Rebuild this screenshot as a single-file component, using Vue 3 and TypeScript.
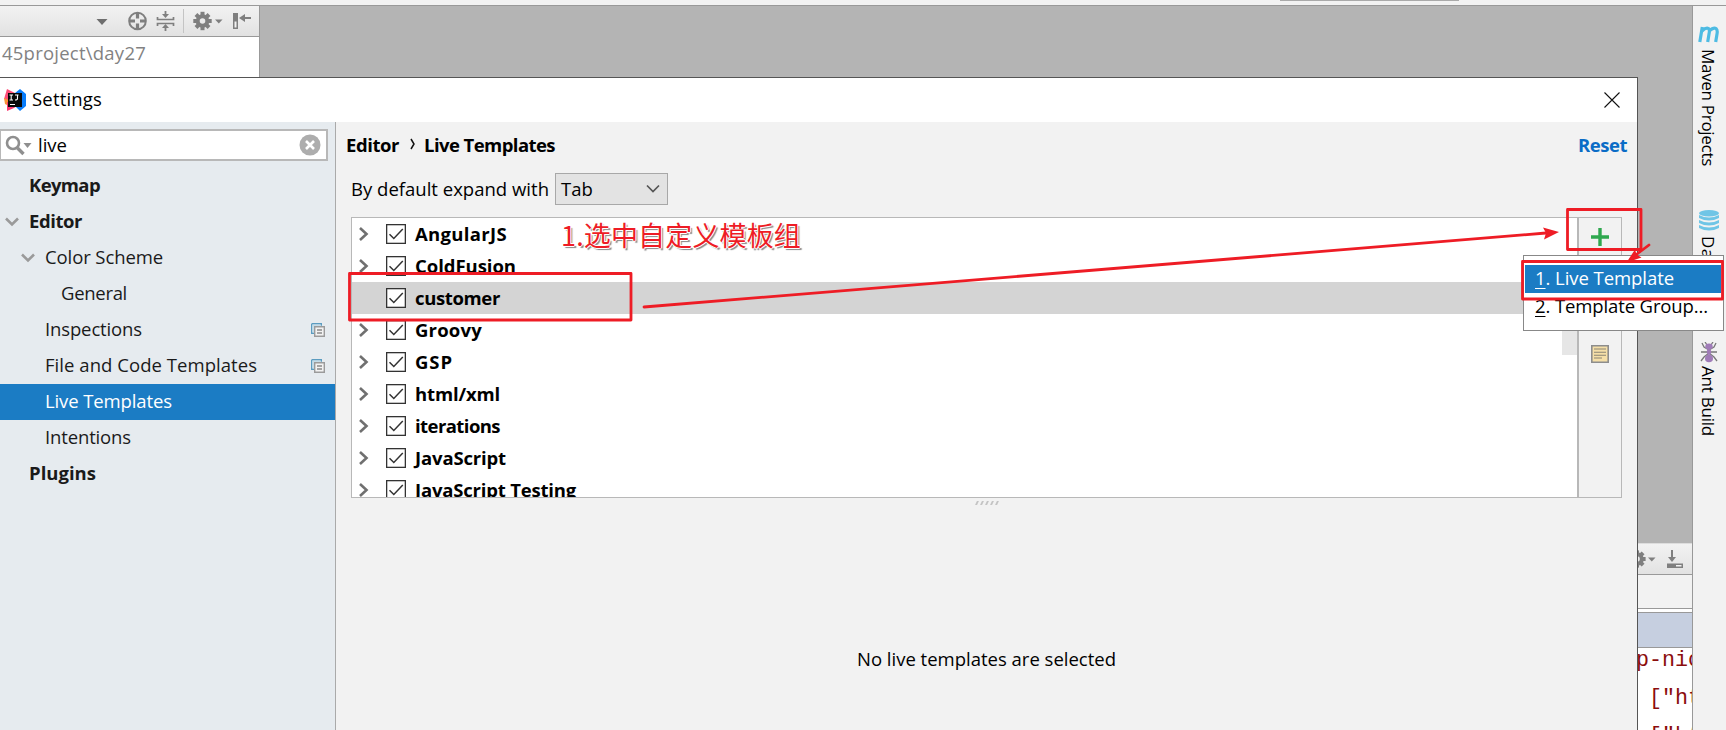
<script setup lang="ts">
import type { Directive } from 'vue'

interface NavItem {
  label: string
  level: number
  width: number
  bold?: boolean
  open?: boolean
  shared?: boolean
  selected?: boolean
}

interface Group {
  label: string
  width: number
  leaf?: boolean
}

const nav: NavItem[] = [
  { label: 'Keymap', level: 0, width: 71, bold: true },
  { label: 'Editor', level: 0, width: 53, bold: true, open: true },
  { label: 'Color Scheme', level: 1, width: 118, open: true },
  { label: 'General', level: 2, width: 66 },
  { label: 'Inspections', level: 1, width: 97 },
  { label: 'File and Code Templates', level: 1, width: 212, shared: true },
  { label: 'Live Templates', level: 1, width: 127, selected: true },
  { label: 'Intentions', level: 1, width: 86 },
  { label: 'Plugins', level: 0, width: 67, bold: true },
]
nav[4].shared = true

const groups: Group[] = [
  { label: 'AngularJS', width: 92 },
  { label: 'ColdFusion', width: 101 },
  { label: 'customer', width: 85, leaf: true },
  { label: 'Groovy', width: 67 },
  { label: 'GSP', width: 38 },
  { label: 'html/xml', width: 85 },
  { label: 'iterations', width: 85 },
  { label: 'JavaScript', width: 91 },
  { label: 'JavaScript Testing', width: 161 },
]

// Tracks a label so that it takes the given length along its line.
const vFit: Directive<HTMLElement, number> = {
  mounted(el, { value }) {
    const vertical = el.classList.contains('vertical')
    const box = el.getBoundingClientRect()
    const natural = vertical ? box.height : box.width
    const count = (el.textContent ?? '').length
    el.style.letterSpacing = `${(value - natural) / count}px`
  },
}

const teeth = [0, 45, 90, 135, 180, 225, 270, 315]
</script>

<template>
  <div class="screen">
    <div class="ide">
      <div class="topbar"><i class="topmark"></i></div>
      <div class="workspace">
        <div class="left">
          <div class="toolbar">
            <svg width="259" height="30" viewBox="0 6 259 30">
              <path d="M96.500 19h11l-5.500 6z" fill="#6e6e6e" />
              <g fill="none" stroke="#7f7f7f">
                <circle cx="137.500" cy="21" r="8.300" stroke-width="2" />
                <path d="M137.500 13v5.500M137.500 23.500V29M129.500 21h5.500M140 21h5.500" stroke-width="3.200" />
                <path d="M157.500 17v2.500h16V17M157.500 26v-2.500h16V26" stroke-width="1.700" />
                <path d="M165.500 11v4M165.500 31v-4" stroke-width="1.800" />
              </g>
              <path d="M162 14h7l-3.500 4zM162 28h7l-3.500-4z" fill="#7f7f7f" />
              <path d="M183.500 9v24" stroke="#c4c4c4" />
              <g transform="translate(202.500 21)">
                <circle r="4.800" fill="none" stroke="#7f7f7f" stroke-width="4" />
                <rect v-for="a in teeth" :key="a" x="-2" y="-9.200" width="4" height="4" fill="#7f7f7f" :transform="`rotate(${a})`" />
              </g>
              <path d="M215 19.500h7.500l-3.700 4z" fill="#7f7f7f" />
              <path d="M233 13h5v16h-5z" fill="#7f7f7f" />
              <path d="M234.500 21.500h2v6h-2z" fill="#f2f2f2" />
              <path d="M242 18h9" stroke="#7f7f7f" stroke-width="2" />
              <path d="M239 18l6-4v8z" fill="#7f7f7f" />
            </svg>
          </div>
          <div class="path"><span v-fit="144">45project\day27</span></div>
        </div>
        <div class="canvas"></div>
        <div class="console">
          <div class="console-head">
            <svg width="55" height="30" viewBox="1637 544 55 30">
              <g transform="translate(1637 559)">
                <circle r="4.800" fill="none" stroke="#7f7f7f" stroke-width="4" />
                <rect v-for="a in teeth" :key="a" x="-2" y="-8.600" width="4" height="4" fill="#7f7f7f" :transform="`rotate(${a})`" />
              </g>
              <path d="M1648 557.500h7.500l-3.700 4z" fill="#7f7f7f" />
              <path d="M1672 550v8" stroke="#7f7f7f" stroke-width="2" />
              <path d="M1668 557h8l-4 5z" fill="#7f7f7f" />
              <path d="M1667 563.500h16v4.500h-16z" fill="#7f7f7f" />
              <path d="M1676 565h5.500v1.500h-5.500z" fill="#f2f2f2" />
            </svg>
          </div>
          <div class="console-tabs"></div>
          <div class="console-gap"></div>
          <div class="console-blue"></div>
          <pre class="code">p-nic
 ["htt
 ["htt</pre>
        </div>
        <div class="strip">
          <svg class="s-m" width="22" height="17" viewBox="0 0 22 17" fill="none" stroke="#4dbbe3" stroke-width="3.200">
            <path d="M4.300 1L1.800 16M4 5Q8 1 10.500 2.500Q12 4 11 8L9.700 16M11 5Q15.500 1 18 2.500Q19.800 4 19 8L17.700 16" />
          </svg>
          <div class="slot"><span class="vertical" v-fit="117">Maven Projects</span></div>
          <svg class="s-db" width="20" height="21" viewBox="0 0 20 21">
            <ellipse cx="10" cy="3.300" rx="10" ry="3.200" fill="#6fc5e6" />
            <path d="M0 5q10 5 20 0v3q-10 5-20 0zM0 10q10 5 20 0v3q-10 5-20 0zM0 15q10 5 20 0v3q-10 5-20 0z" fill="#6fc5e6" />
          </svg>
          <div class="slot db"><span class="vertical" v-fit="79">Database</span></div>
          <svg class="s-ant" width="18" height="21" viewBox="0 0 18 21">
            <path d="M9 8L4 5 2 1M9 8l5-3 2-4M9 10H1M9 10h8M9 11l-5 4-3 4M9 11l5 4 3 4M7 3L5 0M11 3l2-3" fill="none" stroke="#777" stroke-width="1.300" />
            <ellipse cx="9" cy="4.500" rx="3.700" ry="3" fill="#a07cb8" />
            <ellipse cx="9" cy="10" rx="2.200" ry="3" fill="#a07cb8" />
            <ellipse cx="9" cy="16.500" rx="4" ry="3.800" fill="#a07cb8" />
          </svg>
          <div class="slot ant"><span class="vertical" v-fit="70">Ant Build</span></div>
        </div>
      </div>
    </div>

    <div class="dialog">
      <div class="title">
        <svg width="22" height="22" viewBox="0 0 22 22">
          <path d="M3 0L11 4 9 13 0 10z" fill="#fe4c78" />
          <path d="M0 9l7 3-2 5-4-2z" fill="#f99436" />
          <path d="M3 13l12 2-5 4-7 3z" fill="#fc3a72" />
          <path d="M11 4l5-4 6 5v12l-6 5-5-5z" fill="#087cfa" />
          <path d="M4 4h14v14H4z" fill="#090909" />
          <path d="M5.500 6h3.500M7.200 6v5M5.500 11h3.500M11 6h3.500M13.500 6v3.500q0 1.500-2.500 1.500M6 15.500h5" fill="none" stroke="#fff" stroke-width="1.100" />
        </svg>
        <span v-fit="70">Settings</span>
        <svg class="close" width="16" height="16" viewBox="0 0 16 16"><path d="M.5.5l15 15M15.500.5l-15 15" stroke="#111" stroke-width="1.100" /></svg>
      </div>
      <div class="body">
        <div class="sidebar">
          <div class="search">
            <svg width="28" height="26" viewBox="5 132 28 26">
              <circle cx="13" cy="143" r="6" fill="none" stroke="#8f8f8f" stroke-width="2.600" />
              <path d="M17.500 148l6 6" stroke="#8f8f8f" stroke-width="3.400" />
              <path d="M23.500 143h8l-4 5z" fill="#8f8f8f" />
            </svg>
            <span v-fit="29">live</span>
            <svg class="clear" width="22" height="22" viewBox="0 0 22 22">
              <circle cx="11" cy="11" r="10.500" fill="#adadad" />
              <path d="M7 7l8 8M15 7l-8 8" stroke="#fff" stroke-width="2.600" />
            </svg>
          </div>
          <div class="nav">
            <div v-for="n in nav" :key="n.label" class="nav-row" :class="['l' + n.level, { bold: n.bold, on: n.selected }]">
              <svg class="twist" width="16" height="12" viewBox="0 0 16 12">
                <path v-if="n.open" d="M2 2.500l6 6 6-6" fill="none" stroke="#9a9a9a" stroke-width="2.600" />
              </svg>
              <span v-fit="n.width">{{ n.label }}</span>
              <svg v-if="n.shared" class="shared" width="14" height="14" viewBox="0 0 14 14" fill="none">
                <path d="M.7.7h9.600v2M.7.7v9.600h2.500" stroke="#5b9cc0" stroke-width="1.400" />
                <path d="M1.400 1.400h8.200v1.600H3v6.600H1.400z" fill="#c3dce9" />
                <path d="M3.700 3.700h9.600v9.600H3.700z" fill="#f2f2f2" stroke="#9b9b9b" stroke-width="1.400" />
                <path d="M6 7h5M6 10h5" stroke="#8b8b8b" stroke-width="1.300" />
              </svg>
            </div>
          </div>
        </div>
        <div class="main">
          <div class="crumbs">
            <span v-fit="53">Editor</span>
            <svg width="6" height="14" viewBox="0 0 6 14"><path d="M2 2l3 5-3 5" fill="none" stroke="#111" stroke-width="1.500" /></svg>
            <span v-fit="131">Live Templates</span>
            <span class="reset" v-fit="49">Reset</span>
          </div>
          <div class="expand">
            <span v-fit="198">By default expand with</span>
            <div class="select">
              <span v-fit="32">Tab</span>
              <svg width="14" height="10" viewBox="0 0 14 10"><path d="M1 1.500l6 6 6-6" fill="none" stroke="#555" stroke-width="1.700" /></svg>
            </div>
          </div>
          <div class="list">
            <div class="tree">
              <div v-for="g in groups" :key="g.label" class="tree-row" :class="{ hit: g.leaf }">
                <svg class="arrow" width="12" height="16" viewBox="0 0 12 16">
                  <path v-if="!g.leaf" d="M2 2l6.500 6L2 14" fill="none" stroke="#707070" stroke-width="2.600" />
                </svg>
                <svg class="check" width="20" height="20" viewBox="0 0 20 20">
                  <rect x=".65" y=".65" width="18.700" height="18.700" fill="#fff" stroke="#333" stroke-width="1.300" />
                  <path d="M3.500 10.200l4.300 4.300 9-9.500" fill="none" stroke="#333" stroke-width="1.500" />
                </svg>
                <span v-fit="g.width">{{ g.label }}</span>
              </div>
              <i class="thumb"></i>
            </div>
            <div class="actions">
              <svg width="18" height="18" viewBox="0 0 18 18"><path d="M9 0v18M0 9h18" stroke="#2fa84f" stroke-width="3.400" /></svg>
              <svg class="note" width="18" height="18" viewBox="0 0 18 18">
                <path d="M.8.8h16.400v16.400H.8z" fill="#f5dfa8" stroke="#8d8d8d" stroke-width="1.600" />
                <path d="M3 4h12M3 7.300h12M3 10.300h12M3 13h8" stroke="#8b8574" stroke-width="1.100" />
              </svg>
            </div>
          </div>
          <div class="grip"><i v-for="k in 5" :key="k"></i></div>
          <div class="empty"><span v-fit="259">No live templates are selected</span></div>
        </div>
      </div>
    </div>

    <div class="menu">
      <div class="menu-item active"><span v-fit="139"><u>1</u>. Live Template</span></div>
      <div class="menu-item"><span v-fit="173"><u>2</u>. Template Group...</span></div>
    </div>

    <svg class="marks" width="1726" height="730" viewBox="0 0 1726 730" fill="none" stroke="#ee1c25" stroke-width="2.800" stroke-linejoin="round" stroke-linecap="round">
      <path d="M349.500 273.500h281.500v46.500H349.500zM1567.500 209.500h73.500v40h-73.500zM1522.500 261.500h200v37.500h-200z" />
      <path d="M644 307L1546 233M1649 245l-12 9" />
      <path d="M1559 232l-16-4.500 3 5.500-2 6.500zM1626.500 262.500l8.500-13 1.500 5 5 3z" fill="#ee1c25" stroke="none" />
    </svg>
    <div class="caption"><span v-fit="240">1.选中自定义模板组</span></div>
  </div>
</template>

<style>
body {
  overflow: hidden;
}
</style>

<style scoped>
.screen {
  position: relative;
  width: 1726px;
  height: 730px;
  overflow: hidden;
  background: #b4b4b4;
  font-family: "Open Sans", "Noto Sans", "Noto Sans CJK SC", sans-serif;
  font-size: 18.500px;
  color: #000;
  white-space: nowrap;
}
.screen * { box-sizing: border-box; }
svg { display: block; flex: none; }
span { flex: none; }

.ide { display: flex; flex-direction: column; height: 730px; overflow: hidden; }
.topbar { flex: none; height: 6px; background: #f2f2f2; border-bottom: 1px solid #999; display: flex; }
.topmark { width: 179px; height: 1px; margin-left: 1280px; background: #aaa; }
.workspace { height: 724px; flex: none; display: flex; overflow: hidden; }
.left { width: 260px; height: 72px; border-right: 1px solid #999; background: #fff; }
.toolbar { height: 31px; background: linear-gradient(#f2f2f2, #e2e2e2); border-bottom: 1px solid #999; }
.path { padding-left: 2px; line-height: 32px; color: #828282; }
.canvas { flex: 1; }
.console { width: 55px; margin-top: 537px; background: #fff; overflow: hidden; }
.console-head { height: 32px; border-top: 1px solid #ddd; border-bottom: 1px solid #999; background: linear-gradient(#f2f2f2, #e2e2e2); }
.console-tabs { height: 34px; border-bottom: 1px solid #999; background: #f2f2f2; }
.console-gap { height: 4px; border-bottom: 1px solid #999; }
.console-blue { height: 35px; border-bottom: 1px solid #999; background: #c6cfe0; }
.code { margin: -6px 0 0 -1px; font: 21.670px/38px "Liberation Mono", monospace; color: #8b0d0d; }
.strip { width: 34px; border-left: 1px solid #999; background: #f2f2f2; display: flex; flex-direction: column; font-size: 17px; align-items: flex-start; }
.slot { height: 117px; margin: 6px 0 0 3px; display: flex; align-items: flex-start; }
.vertical { writing-mode: vertical-rl; line-height: 24px; }
.s-m { margin: 20px 0 0 5px; }
.s-db { margin: 44px 0 0 6px; }
.slot.db { height: 79px; margin-top: 5px; }
.s-ant { margin: 27px 0 0 7px; }
.slot.ant { height: 70px; margin-top: 3px; }

.dialog { position: absolute; left: 0; top: 77px; width: 1638px; height: 653px; border-top: 1px solid #555; border-right: 1px solid #555; background: #f2f2f2; display: flex; flex-direction: column; }
.title { height: 44px; background: #fff; display: flex; align-items: center; gap: 6px; padding: 0 17px 1px 4px; }
.title span { padding-bottom: 2px; }
.close { margin-left: auto; }
.body { flex: 1; display: flex; }
.sidebar { width: 336px; background: #e6ebef; border-right: 1px solid #aaa; }
.search { width: 328px; height: 32px; margin-top: 7px; border: 2px solid #b8b8b8; border-left-width: 1px; background: #fff; display: flex; align-items: center; padding: 0 5px 0 4px; gap: 5px; }
.search span { padding-bottom: 2px; }
.clear { margin-left: auto; }
.nav { padding-top: 7px; color: #1a1a1a; }
.nav-row { height: 36px; display: flex; align-items: center; gap: 9px; padding-left: 4px; }
.nav-row span { padding-bottom: 4px; }
.nav-row.l1 { padding-left: 20px; }
.nav-row.l2 { padding-left: 36px; }
.bold { font-weight: 700; }
.on { background: #1b7cc4; color: #fff; }
.shared { margin-left: auto; margin-right: 10px; }

.main { flex: 1; display: flex; flex-direction: column; }
.crumbs { height: 28px; margin-top: 9px; padding: 0 10px 2px; display: flex; align-items: center; font-weight: 700; gap: 9.500px; }
.reset { margin-left: auto; color: #0a6cc6; }
.expand { height: 32px; margin-top: 14px; padding-left: 15px; display: flex; align-items: center; gap: 6px; }
.expand span { padding-bottom: 2px; }
.select { width: 113px; height: 32px; border: 1px solid #a8a8a8; background: #e3e3e3; display: flex; align-items: center; justify-content: space-between; padding: 0 7px 0 5px; }
.list { height: 281px; width: 1271px; margin: 12px 0 0 15px; display: flex; border: 1px solid #b8b8b8; }
.tree { flex: 1; position: relative; overflow: hidden; background: #fff; }
.tree-row { height: 32px; display: flex; align-items: center; padding-left: 6px; font-weight: 700; }
.tree-row span { padding-bottom: 2px; }
.hit { background: #d4d4d4; }
.check { margin-left: 16px; margin-right: 9px; }
.thumb { position: absolute; right: 0; top: 96px; width: 15px; height: 41px; background: #e6e6e6; }
.actions { width: 44px; border-left: 2px solid #b8b8b8; display: flex; flex-direction: column; align-items: center; padding-top: 10px; }
.note { margin-top: 99px; }
.grip { display: flex; gap: 3px; margin: 3px 0 0 640px; height: 4px; }
.grip i { width: 2px; height: 4px; background: #c4c4c4; transform: skewX(-25deg); }
.empty { margin-top: 140px; padding-left: 521px; line-height: 28px; }

.menu { position: absolute; left: 1523px; top: 255px; width: 201px; height: 76px; border: 1px solid #888; background: #fff; padding: 9px 2px 0 1px; }
.menu-item { height: 28px; line-height: 26px; padding-left: 10px; }
.active { background: #1b7cc4; color: #fff; }
u { text-decoration-thickness: 1px; text-underline-offset: 3px; }

.marks { position: absolute; left: 0; top: 0; }
.caption { position: absolute; left: 561px; top: 215px; font: 27px/40px "Noto Sans CJK SC", sans-serif; color: #ee1c25; text-shadow: 1px 0 #fff, -1px 0 #fff, 0 1px #fff, 0 -1px #fff, 2px 2px 1px #888; }
</style>
